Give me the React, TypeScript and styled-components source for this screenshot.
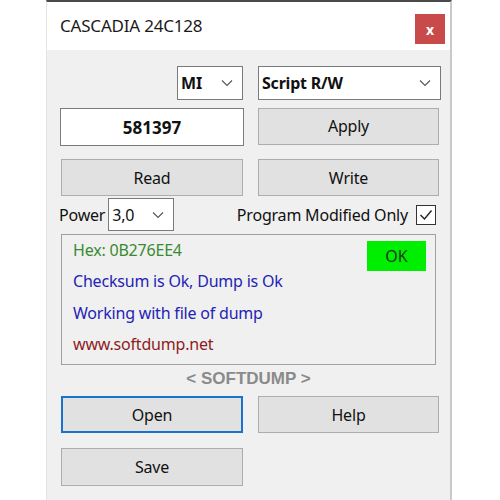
import styled, { createGlobalStyle } from 'styled-components';

const GlobalStyle = createGlobalStyle`
    html, body {
        margin: 0;
        padding: 0;
        background: #ffffff;
    }
    body {
        font-family: "Noto Sans", "Open Sans", sans-serif;
    }
`;

function Chevron() {
    return (
        <svg width="12" height="8" viewBox="0 0 12 8">
            <polyline points="1,1.5 6,6.5 11,1.5" fill="none" stroke="#555" strokeWidth="1.1" />
        </svg>
    );
}

function Check() {
    return (
        <svg width="16" height="16" viewBox="0 0 16 16">
            <polyline points="2.5,8 6.5,12 13.5,3.5" fill="none" stroke="#222" strokeWidth="1.4" />
        </svg>
    );
}

interface SelectProps {
    value: string;
    width: number;
    bold?: boolean;
}

function Select({ value, width, bold }: SelectProps) {
    return (
        <SelectBox style={{ width }}>
            <SelectValue $bold={bold}>{value}</SelectValue>
            <Chevron />
        </SelectBox>
    );
}

function App() {
    return (
        <>
            <GlobalStyle />
            <Window>
                <TitleBar>
                    <Title>CASCADIA 24C128</Title>
                    <CloseButton>x</CloseButton>
                </TitleBar>

                <Body>
                    <Row $top={16}>
                        <Cell $end>
                            <Select value="MI" width={66} bold />
                        </Cell>
                        <Select value="Script R/W" width={183} bold />
                    </Row>

                    <Row $top={6}>
                        <CodeInput>581397</CodeInput>
                        <Button $height={37}>Apply</Button>
                    </Row>

                    <Row $top={13}>
                        <Button>Read</Button>
                        <Button>Write</Button>
                    </Row>

                    <OptionsRow>
                        <PowerGroup>
                            <Label>Power</Label>
                            <Select value="3,0" width={66} />
                        </PowerGroup>
                        <CheckGroup>
                            <Label>Program Modified Only</Label>
                            <CheckBox>
                                <Check />
                            </CheckBox>
                        </CheckGroup>
                    </OptionsRow>

                    <Panel>
                        <StatusBadge>OK</StatusBadge>
                        <Message $color="#3a8a32">Hex: 0B276EE4</Message>
                        <Message $color="#2323b4">Checksum is Ok, Dump is Ok</Message>
                        <Message $color="#2323b4">Working with file of dump</Message>
                        <Message $color="#8e1c1c">www.softdump.net</Message>
                    </Panel>

                    <Brand>&lt; SOFTDUMP &gt;</Brand>

                    <Row $top={6}>
                        <Button $focused>Open</Button>
                        <Button>Help</Button>
                    </Row>

                    <Row $top={15}>
                        <Button $height={38}>Save</Button>
                    </Row>
                </Body>
            </Window>
        </>
    );
}

export default App;

const Window = styled.div`
    margin-left: 46px;
    width: 406px;
    height: 500px;
    background: #f0f0f0;
    border-top: 2px solid #4a4a4a;
    border-left: 1px solid #e4e4e4;
    border-right: 2px solid #c9c9c9;
    box-sizing: border-box;
    overflow: hidden;
`;

const TitleBar = styled.div`
    height: 48px;
    background: #ffffff;
    display: flex;
    align-items: center;
    justify-content: space-between;
    padding: 0 5px 0 13px;
`;

const Title = styled.div`
    font-size: 17px;
    color: #1a1a1a;
    letter-spacing: -0.2px;
    margin-top: -2px;
`;

const CloseButton = styled.div`
    width: 30px;
    height: 30px;
    margin-top: 6px;
    background: #c94a4b;
    color: #ffffff;
    font-weight: bold;
    font-size: 14px;
    display: flex;
    align-items: center;
    justify-content: center;
`;

const Body = styled.div`
    padding: 0 14px 0 14px;
    display: flex;
    flex-direction: column;
`;

const Row = styled.div<{ $top: number }>`
    display: grid;
    grid-template-columns: 182px 181px;
    column-gap: 15px;
    margin-top: ${p => p.$top}px;
    align-items: center;
`;

const Cell = styled.div<{ $end?: boolean }>`
    display: flex;
    justify-content: ${p => (p.$end ? 'flex-end' : 'flex-start')};
`;

const SelectBox = styled.div`
    height: 34px;
    box-sizing: border-box;
    background: #ffffff;
    border: 1px solid #7a7a7a;
    display: flex;
    align-items: center;
    justify-content: space-between;
    padding: 0 9px 0 3px;
`;

const SelectValue = styled.span<{ $bold?: boolean }>`
    font-size: 16px;
    font-weight: ${p => (p.$bold ? 'bold' : 'normal')};
    color: #111;
    letter-spacing: -0.2px;
`;

const CodeInput = styled.div`
    height: 38px;
    margin: 2px -1px 0 -1px;
    box-sizing: border-box;
    background: #ffffff;
    border: 1px solid #7a7a7a;
    display: flex;
    align-items: center;
    justify-content: center;
    font-size: 17px;
    font-weight: bold;
    color: #111;
`;

const Button = styled.div<{ $height?: number; $focused?: boolean }>`
    height: ${p => p.$height ?? 37}px;
    box-sizing: border-box;
    background: #e1e1e1;
    border: ${p => (p.$focused ? '2px solid #1a73c9' : '1px solid #adadad')};
    display: flex;
    align-items: center;
    justify-content: center;
    font-size: 16px;
    color: #111;
    letter-spacing: -0.2px;
`;

const OptionsRow = styled.div`
    margin-top: 2px;
    display: flex;
    align-items: center;
    justify-content: space-between;
`;

const PowerGroup = styled.div`
    display: flex;
    align-items: center;
    gap: 3px;
    margin-left: -2px;

    & > div {
        height: 33px;
    }
`;

const CheckGroup = styled.div`
    display: flex;
    align-items: center;
    gap: 8px;
`;

const Label = styled.span`
    font-size: 16px;
    color: #111;
    letter-spacing: -0.2px;
`;

const CheckBox = styled.div`
    width: 20px;
    height: 20px;
    box-sizing: border-box;
    background: #ffffff;
    border: 1px solid #333;
    display: flex;
    align-items: center;
    justify-content: center;
`;

const Panel = styled.div`
    position: relative;
    margin-top: 3px;
    height: 131px;
    box-sizing: border-box;
    border: 1px solid #a0a0a0;
    padding: 4px 10px 0 11px;
    display: flex;
    flex-direction: column;
`;

const StatusBadge = styled.div`
    position: absolute;
    top: 6px;
    right: 9px;
    width: 59px;
    height: 30px;
    background: #00ee00;
    color: #173d17;
    font-size: 16px;
    display: flex;
    align-items: center;
    justify-content: center;
`;

const Message = styled.div<{ $color: string }>`
    height: 33px;
    line-height: 22px;
    font-size: 16px;
    color: ${p => p.$color};
    letter-spacing: -0.2px;
`;

const Brand = styled.div`
    margin-top: 3px;
    text-align: center;
    font-family: "Liberation Sans", Arial, sans-serif;
    font-weight: bold;
    font-size: 17px;
    color: #8a8a8a;
    line-height: 22px;
`;
